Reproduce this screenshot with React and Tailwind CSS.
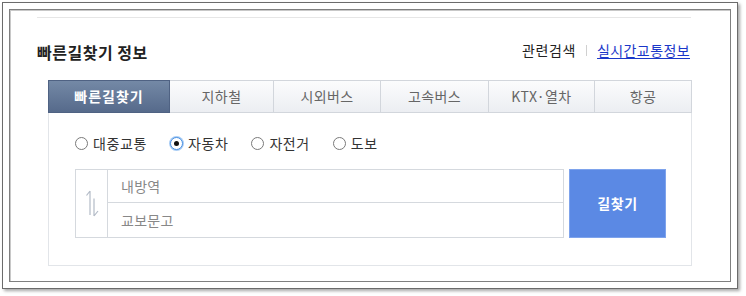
import React from "react";

const font = { fontFamily: '"Noto Sans CJK KR", "Noto Sans", sans-serif' };

const tabs = [
  { label: "빠른길찾기", w: "w-[122px]", active: true },
  { label: "지하철", w: "w-[104px]" },
  { label: "시외버스", w: "w-[107px]" },
  { label: "고속버스", w: "w-[108px]" },
  { label: "KTX·열차", w: "w-[106px]" },
  { label: "항공", w: "w-[97px]" },
];

const radios = [
  { label: "대중교통" },
  { label: "자동차", checked: true },
  { label: "자전거" },
  { label: "도보" },
];

function Radio({ checked }) {
  if (checked) {
    return (
      <span className="w-[13px] h-[13px] rounded-full border border-[#4a90e2] shadow-[0_0_0_1px_#a9cdf5] bg-white flex items-center justify-center">
        <span className="w-[5px] h-[5px] rounded-full bg-[#111]" />
      </span>
    );
  }
  return <span className="w-[13px] h-[13px] rounded-full border border-[#7a7a7a] bg-white" />;
}

export default function App() {
  return (
    <div className="w-[746px] h-[296px] bg-white overflow-hidden" style={font}>
      <div className="ml-[2px] mt-[2px] w-[736px] h-[287px] border border-[#6b6b6b] shadow-[2px_2px_3px_rgba(0,0,0,0.35)] p-[6px] bg-white">
        <div className="w-full h-full border border-[#7f7f7f] shadow-[inset_1px_1px_0_#c8c8c8] pt-[7px] pl-[27px]">
          <div className="w-[654px] h-px bg-[#e6e6e6]" />
          <div className="mt-[22px] w-[654px] h-[20px] flex items-center justify-between">
            <span className="text-[16px] font-bold text-[#222] tracking-[0.5px] leading-none mt-[4px]">빠른길찾기 정보</span>
            <div className="flex items-center text-[14px] leading-none">
              <span className="text-[#222] tracking-[0.6px]">관련검색</span>
              <span className="mx-[10px] w-px h-[11px] bg-[#d0d0d0]" />
              <span className="text-[#1a37c9] underline underline-offset-2 tracking-[0.4px] mr-[1px]">실시간교통정보</span>
            </div>
          </div>
          <div className="mt-[20px] ml-[11px] w-[644px]">
            <div className="flex h-[33px]">
              {tabs.map((t) =>
                t.active ? (
                  <div
                    key={t.label}
                    className={`${t.w} h-full flex items-center justify-center bg-gradient-to-b from-[#7489a6] to-[#566a8b] border border-[#4f6283] text-white text-[14px] font-bold tracking-[1px]`}
                  >
                    {t.label}
                  </div>
                ) : (
                  <div
                    key={t.label}
                    className={`${t.w} h-full flex items-center justify-center bg-gradient-to-b from-[#fbfcfd] to-[#eceef2] border-y border-r border-[#d2d6dc] text-[#666] text-[14px] tracking-[0.4px]`}
                  >
                    {t.label}
                  </div>
                )
              )}
            </div>
            <div className="h-[153px] border-x border-b border-[#e2e5e9] pt-[20px] pl-[26px]">
              <div className="h-[20px] flex items-center gap-[23px]">
                {radios.map((r) => (
                  <div key={r.label} className="flex items-center gap-[5px]">
                    <Radio checked={r.checked} />
                    <span className="text-[14px] text-[#333] leading-none tracking-[0.6px]">{r.label}</span>
                  </div>
                ))}
              </div>
              <div className="mt-[16px] flex">
                <div className="w-[489px] h-[69px] border border-[#d5d9de] flex">
                  <div className="w-[32px] h-full border-r border-[#d5d9de] flex items-center justify-center">
                    <svg width="16" height="27" viewBox="0 0 16 27" fill="none" stroke="#b3bbc7" strokeWidth="1.2">
                      <path d="M6 1 V25 M6 1 L2.5 5.5" />
                      <path d="M10 8.5 V26 M10 26 L14 21" />
                    </svg>
                  </div>
                  <div className="flex-1 flex flex-col">
                    <div className="h-[33px] border-b border-[#d5d9de] flex items-center pl-[13px] text-[14px] text-[#888] tracking-[0.3px]">
                      내방역
                    </div>
                    <div className="flex-1 flex items-center pl-[13px] text-[14px] text-[#888] tracking-[0.3px]">교보문고</div>
                  </div>
                </div>
                <div className="ml-[5px] w-[97px] h-[69px] bg-[#5b89e4] border border-[#7ea3ec] flex items-center justify-center text-white text-[14px] font-bold tracking-[0.7px]">
                  길찾기
                </div>
              </div>
            </div>
          </div>
        </div>
      </div>
    </div>
  );
}
